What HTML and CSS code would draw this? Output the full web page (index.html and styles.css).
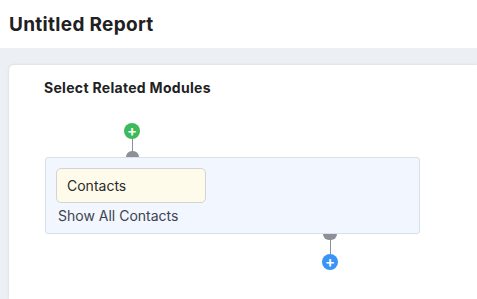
FILE: index.html
```html
<!DOCTYPE html>
<html lang="en">
<head>
  <meta charset="UTF-8" />
  <meta name="viewport" content="width=device-width, initial-scale=1.0"/>
  <title>Untitled Report</title>
  <link rel="stylesheet" href="styles.css">
</head>
<body>

  <!-- Bara de sus -->
  <div class="top-bar">
    <h1 class="report-title">Untitled Report</h1>
  </div>

  <!-- Zona principala -->
  <div class="main">
    <div class="card">
      <div class="card-title">Select Related Modules</div>

      <div class="flow">
        <div class="node node-top">
          <span class="plus plus-green">+</span>
          <span class="stem"></span>
          <span class="knob"></span>
        </div>

        <div class="module-box">
          <div class="module-field">Contacts</div>
          <div class="module-link">Show All Contacts</div>
        </div>

        <div class="node node-bottom">
          <span class="knob knob-down"></span>
          <span class="stem"></span>
          <span class="plus plus-blue">+</span>
        </div>
      </div>
    </div>
  </div>

</body>
</html>
```

FILE: styles.css
```css
* {
  margin: 0;
  padding: 0;
  box-sizing: border-box;
}

body {
  font-family: Inter, "Noto Sans", sans-serif;
  background: #fff;
  color: #222;
  height: 100vh;
  overflow: hidden;
  display: flex;
  flex-direction: column;
}

/* Bara de sus */
.top-bar {
  height: 48px;
  display: flex;
  align-items: center;
  padding-left: 9px;
  background: #fff;
}

.report-title {
  font-size: 19px;
  font-weight: 700;
  color: #1f2023;
  letter-spacing: 0.3px;
}

/* Zona gri */
.main {
  flex: 1;
  background: #ecf0f4;
  padding: 17px 0 0 9px;
  display: flex;
}

.card {
  flex: 1;
  background: #fff;
  border-radius: 5px 0 0 0;
  box-shadow: 0 0 3px rgba(40, 60, 90, 0.15);
  padding: 14px 0 0 35px;
}

.card-title {
  font-size: 14px;
  font-weight: 700;
  color: #222;
  line-height: 17px;
  letter-spacing: 0.3px;
}

.flow {
  margin-top: 27px;
  margin-left: 1px;
  width: 375px;
}

/* Conectori */
.node {
  width: 16px;
  display: flex;
  flex-direction: column;
  align-items: center;
}

.node-top {
  margin-left: 79px;
}

.node-bottom {
  margin-left: 277px;
}

.plus {
  width: 16px;
  height: 16px;
  border-radius: 50%;
  color: #fff;
  font-size: 15px;
  font-weight: 600;
  line-height: 16px;
  text-align: center;
}

.plus-green {
  background: #3dba5c;
}

.plus-blue {
  background: #3a93f6;
}

.stem {
  width: 1px;
  height: 12px;
  background: #8d9096;
}

.node-bottom .stem {
  height: 14px;
}

.knob {
  width: 13px;
  height: 6px;
  background: #8d9096;
  border-radius: 7px 7px 0 0;
}

.knob-down {
  width: 14px;
  border-radius: 0 0 7px 7px;
}

/* Caseta modulului */
.module-box {
  height: 77px;
  background: #f2f6fe;
  border: 1px solid #d8e0ea;
  border-radius: 3px;
  padding: 10px 0 0 10px;
}

.module-field {
  width: 150px;
  height: 35px;
  background: #fffbea;
  border: 1px solid #d3d3d3;
  border-radius: 5px;
  padding-left: 10px;
  display: flex;
  align-items: center;
  font-size: 14px;
  color: #2a2a2a;
}

.module-link {
  margin-top: 4px;
  margin-left: 2px;
  font-size: 14px;
  color: #3d4350;
}
```
